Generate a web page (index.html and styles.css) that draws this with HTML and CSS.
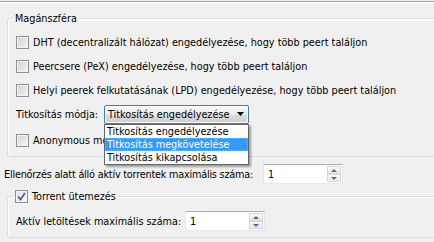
FILE: index.html
```html
<!DOCTYPE html>
<html lang="hu">
<head>
    <meta charset="UTF-8">
    <title>Beállítások - BitTorrent</title>
    <link rel="stylesheet" href="styles.css">
</head>
<body>

    <div class="topline"></div>

    <fieldset class="group privacy">
        <legend class="group-title">Magánszféra</legend>

        <label class="row check first"><span class="box"></span>DHT (decentralizált hálózat) engedélyezése, hogy több peert találjon</label>
        <label class="row check"><span class="box"></span>Peercsere (PeX) engedélyezése, hogy több peert találjon</label>
        <label class="row check"><span class="box"></span>Helyi peerek felkutatásának (LPD) engedélyezése, hogy több peert találjon</label>

        <div class="row">
            <span class="label enc-label">Titkosítás módja:</span>
            <div class="combo-wrap">
                <div class="combo">
                    <span class="combo-text">Titkosítás engedélyezése</span>
                    <svg class="arrow" width="7" height="4" viewBox="0 0 7 4"><path d="M0 0h7L3.5 4z" fill="#000"/></svg>
                </div>
                <ul class="combo-list">
                    <li>Titkosítás engedélyezése</li>
                    <li class="selected">Titkosítás megkövetelése</li>
                    <li>Titkosítás kikapcsolása</li>
                </ul>
            </div>
        </div>

        <label class="row check anon"><span class="box"></span>Anonymous mód (<a href="#">További információ</a>)</label>
    </fieldset>

    <div class="row checking-row">
        <span class="label checking-label">Ellenőrzés alatt álló aktív torrentek maximális száma:</span>
        <div class="spin">
            <span class="spin-value">1</span>
            <div class="spin-buttons">
                <span class="spin-btn up"></span>
                <span class="spin-btn down"></span>
            </div>
        </div>
    </div>

    <fieldset class="group sched">
        <legend class="group-title">
            <span class="box checked">
                <svg width="9" height="9" viewBox="0 0 9 9"><path d="M1 4.5l2.5 3L8 1" fill="none" stroke="#4a5f97" stroke-width="1.8"/></svg>
            </span>Torrent ütemezés
        </legend>

        <div class="row">
            <span class="label dl-label">Aktív letöltések maximális száma:</span>
            <div class="spin">
                <span class="spin-value">1</span>
                <div class="spin-buttons">
                    <span class="spin-btn up"></span>
                    <span class="spin-btn down"></span>
                </div>
            </div>
        </div>
    </fieldset>

</body>
</html>
```

FILE: styles.css
```css
* {
    margin: 0;
    padding: 0;
    box-sizing: border-box;
}

body {
    font-family: "DejaVu Sans Condensed", "Liberation Sans", sans-serif;
    font-size: 10.75px;
    line-height: 13px;
    background-color: #f0f0f0;
    color: #000;
    overflow: hidden;
    height: 242px;
}

.topline {
    margin-top: 1px;
    border-top: 1px solid #a0a0a0;
    box-shadow: 0 1px 0 #fff;
}

.group {
    border: 1px solid #d5dfe5;
    border-radius: 3px;
    box-shadow: inset 1px 1px 0 #fff;
    margin: 10px -20px 0 7px;
    padding: 0 0 4px 8px;
    min-width: 0;
}

.group-title {
    display: flex;
    align-items: center;
    gap: 4px;
    margin-left: -3px;
    padding: 0 2px;
}

.row {
    display: flex;
    align-items: center;
    height: 24px;
}

.check {
    gap: 4px;
}

.check.first {
    margin-top: 5px;
}

.anon {
    margin-top: 2px;
}

.box {
    display: inline-flex;
    align-items: center;
    justify-content: center;
    flex-shrink: 0;
    width: 13px;
    height: 13px;
    border: 1px solid #8e8f8f;
    background: linear-gradient(135deg, #cfd3d8, #f4f4f4);
    box-shadow: inset 0 0 0 1px #f3f3f3;
}

.box.checked {
    background: linear-gradient(135deg, #dde3ea, #fbfbfb);
}

.label {
    flex-shrink: 0;
    white-space: nowrap;
}

.enc-label {
    width: 88px;
}

a {
    color: #0000ff;
}

.combo-wrap {
    position: relative;
    flex: none;
    width: 145px;
}

.combo {
    display: flex;
    align-items: center;
    width: 145px;
    height: 19px;
    padding: 0 4px 0 3px;
    border: 1px solid #3c7fb1;
    border-radius: 2px;
    background: linear-gradient(#f7f7f7 0%, #ececec 50%, #dcdcdc 51%, #cfcfcf 100%);
    box-shadow: inset 0 0 0 1px #fdfdfd;
}

.combo-text {
    flex: 1;
    white-space: nowrap;
    overflow: hidden;
}

.arrow {
    flex: none;
}

.combo-list {
    position: absolute;
    top: 19px;
    left: 0;
    width: 145px;
    list-style: none;
    background: #fff;
    border: 1px solid #646464;
    box-shadow: 2px 2px 2px rgba(0, 0, 0, 0.35);
    z-index: 2;
}

.combo-list li {
    height: 13px;
    line-height: 13px;
    padding-left: 2px;
    white-space: nowrap;
}

.combo-list .selected {
    background: #3399ff;
    color: #fff;
    outline: 1px dotted #f3a04f;
    outline-offset: -1px;
}

.checking-row {
    margin-top: 7px;
    padding-left: 4px;
    height: 20px;
}

.checking-label {
    width: 259px;
    letter-spacing: -0.2px;
}

.dl-label {
    width: 169px;
}

.sched {
    margin-top: 6px;
    padding-top: 6px;
}

.spin {
    display: flex;
    align-items: center;
    justify-content: space-between;
    flex: none;
    width: 80px;
    height: 20px;
    padding: 1px 1px 1px 4px;
    background: #fff;
    border: 1px solid #e3e9ef;
    border-top-color: #abadb3;
}

.spin-buttons {
    display: flex;
    flex-direction: column;
    width: 14px;
    height: 16px;
}

.spin-btn {
    flex: 1;
    display: flex;
    align-items: center;
    justify-content: center;
    border: 1px solid #d8d8d8;
    background: linear-gradient(#f8f8f8, #e8e8e8);
}

.spin-btn::after {
    content: "";
    border-left: 3px solid transparent;
    border-right: 3px solid transparent;
}

.spin-btn.up::after {
    border-bottom: 3px solid #4d6a9a;
}

.spin-btn.down::after {
    border-top: 3px solid #4d6a9a;
}
```
